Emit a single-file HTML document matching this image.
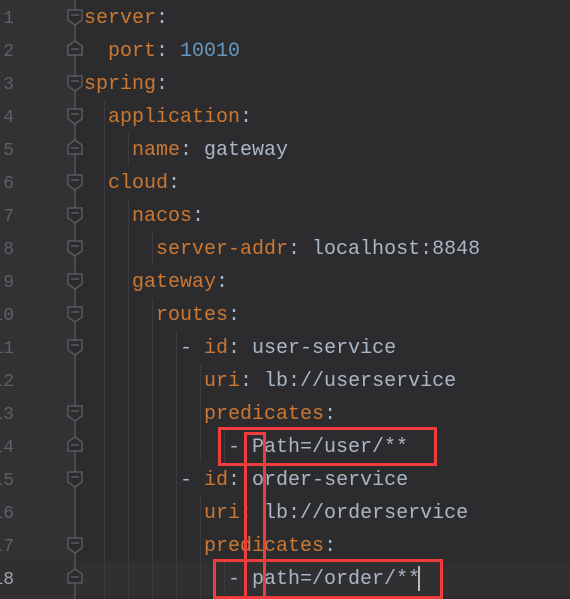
<!DOCTYPE html><html><head><style>
body{margin:0;width:570px;height:599px;overflow:hidden;background:#2c2b2e;font-family:"Liberation Mono",monospace;font-size:20px;position:relative}
.g{position:absolute;left:0;top:0;width:74px;height:599px;background:#323134}
.ln{position:absolute;right:556px;color:#5f5f64;font-size:18px;line-height:33px;margin-top:2px}
.r{position:absolute;left:84px;line-height:33px;white-space:pre;color:#a9b7c6;margin-top:2px}
.k{color:#cc7832}.n{color:#6897bb}
.fl{position:absolute;left:74px;top:0;width:2px;height:599px;background:#4b4a4e}
.ig{position:absolute;width:1px;background:#3c3b3f}
.box{position:absolute;border:3px solid #f03c3c;box-sizing:border-box}
</style></head><body>
<div class="g"></div>
<div style="position:absolute;left:0;top:562px;width:570px;height:33px;background:#302f32"></div>
<div class="fl"></div>
<div class="ig" style="left:104px;top:100px;height:499px"></div>
<div class="ig" style="left:128px;top:133px;height:33px"></div>
<div class="ig" style="left:128px;top:199px;height:400px"></div>
<div class="ig" style="left:152px;top:232px;height:33px"></div>
<div class="ig" style="left:152px;top:298px;height:301px"></div>
<div class="ig" style="left:176px;top:331px;height:268px"></div>
<div class="ig" style="left:200px;top:364px;height:98px"></div>
<div class="ig" style="left:200px;top:496px;height:103px"></div>
<div class="ig" style="left:224px;top:430px;height:33px"></div>
<div class="ig" style="left:224px;top:562px;height:33px"></div>
<svg style="position:absolute;left:0;top:0" width="570" height="599">
<g fill="#2c2b2e" stroke="#5a595d" stroke-width="1.5">
<g id="d"><path d="M68 10h14v10l-7 5l-7-5z"/><path d="M71 15h8" /></g>
<use href="#d" y="66"/><use href="#d" y="99"/><use href="#d" y="165"/><use href="#d" y="198"/><use href="#d" y="231"/><use href="#d" y="264"/><use href="#d" y="297"/><use href="#d" y="330"/><use href="#d" y="396"/><use href="#d" y="462"/><use href="#d" y="528"/>
<g id="u"><path d="M68 55v-9l7-5l7 5v9z"/><path d="M71 49h8"/></g>
<use href="#u" y="0"/><use href="#u" y="99"/><use href="#u" y="396"/><use href="#u" y="528"/>
</g></svg>
<div class="ln" style="top:1px">1</div><div class="ln" style="top:34px">2</div><div class="ln" style="top:67px">3</div><div class="ln" style="top:100px">4</div><div class="ln" style="top:133px">5</div><div class="ln" style="top:166px">6</div><div class="ln" style="top:199px">7</div><div class="ln" style="top:232px">8</div><div class="ln" style="top:265px">9</div><div class="ln" style="top:298px">10</div><div class="ln" style="top:331px">11</div><div class="ln" style="top:364px">12</div><div class="ln" style="top:397px">13</div><div class="ln" style="top:430px">14</div><div class="ln" style="top:463px">15</div><div class="ln" style="top:496px">16</div><div class="ln" style="top:529px">17</div><div class="ln" style="top:562px;color:#a4a3a8">18</div>
<div class="r" style="top:0"><span class="k">server</span>:</div>
<div class="r" style="top:33px">  <span class="k">port</span>: <span class="n">10010</span></div>
<div class="r" style="top:66px"><span class="k">spring</span>:</div>
<div class="r" style="top:99px">  <span class="k">application</span>:</div>
<div class="r" style="top:132px">    <span class="k">name</span>: gateway</div>
<div class="r" style="top:165px">  <span class="k">cloud</span>:</div>
<div class="r" style="top:198px">    <span class="k">nacos</span>:</div>
<div class="r" style="top:231px">      <span class="k">server-addr</span>: localhost:8848</div>
<div class="r" style="top:264px">    <span class="k">gateway</span>:</div>
<div class="r" style="top:297px">      <span class="k">routes</span>:</div>
<div class="r" style="top:330px">        - <span class="k">id</span>: user-service</div>
<div class="r" style="top:363px">          <span class="k">uri</span>: lb://userservice</div>
<div class="r" style="top:396px">          <span class="k">predicates</span>:</div>
<div class="r" style="top:429px">            - Path=/user/**</div>
<div class="r" style="top:462px">        - <span class="k">id</span>: order-service</div>
<div class="r" style="top:495px">          <span class="k">uri</span>: lb://orderservice</div>
<div class="r" style="top:528px">          <span class="k">predicates</span>:</div>
<div class="r" style="top:561px">            - path=/order/**</div>
<div style="position:absolute;left:418px;top:566px;width:2px;height:25px;background:#bbb"></div>
<div class="box" style="left:218px;top:427px;width:219px;height:39px"></div>
<div class="box" style="left:213px;top:559px;width:230px;height:40px"></div>
<div class="box" style="left:244px;top:432px;width:22px;height:167px"></div>
</body></html>
